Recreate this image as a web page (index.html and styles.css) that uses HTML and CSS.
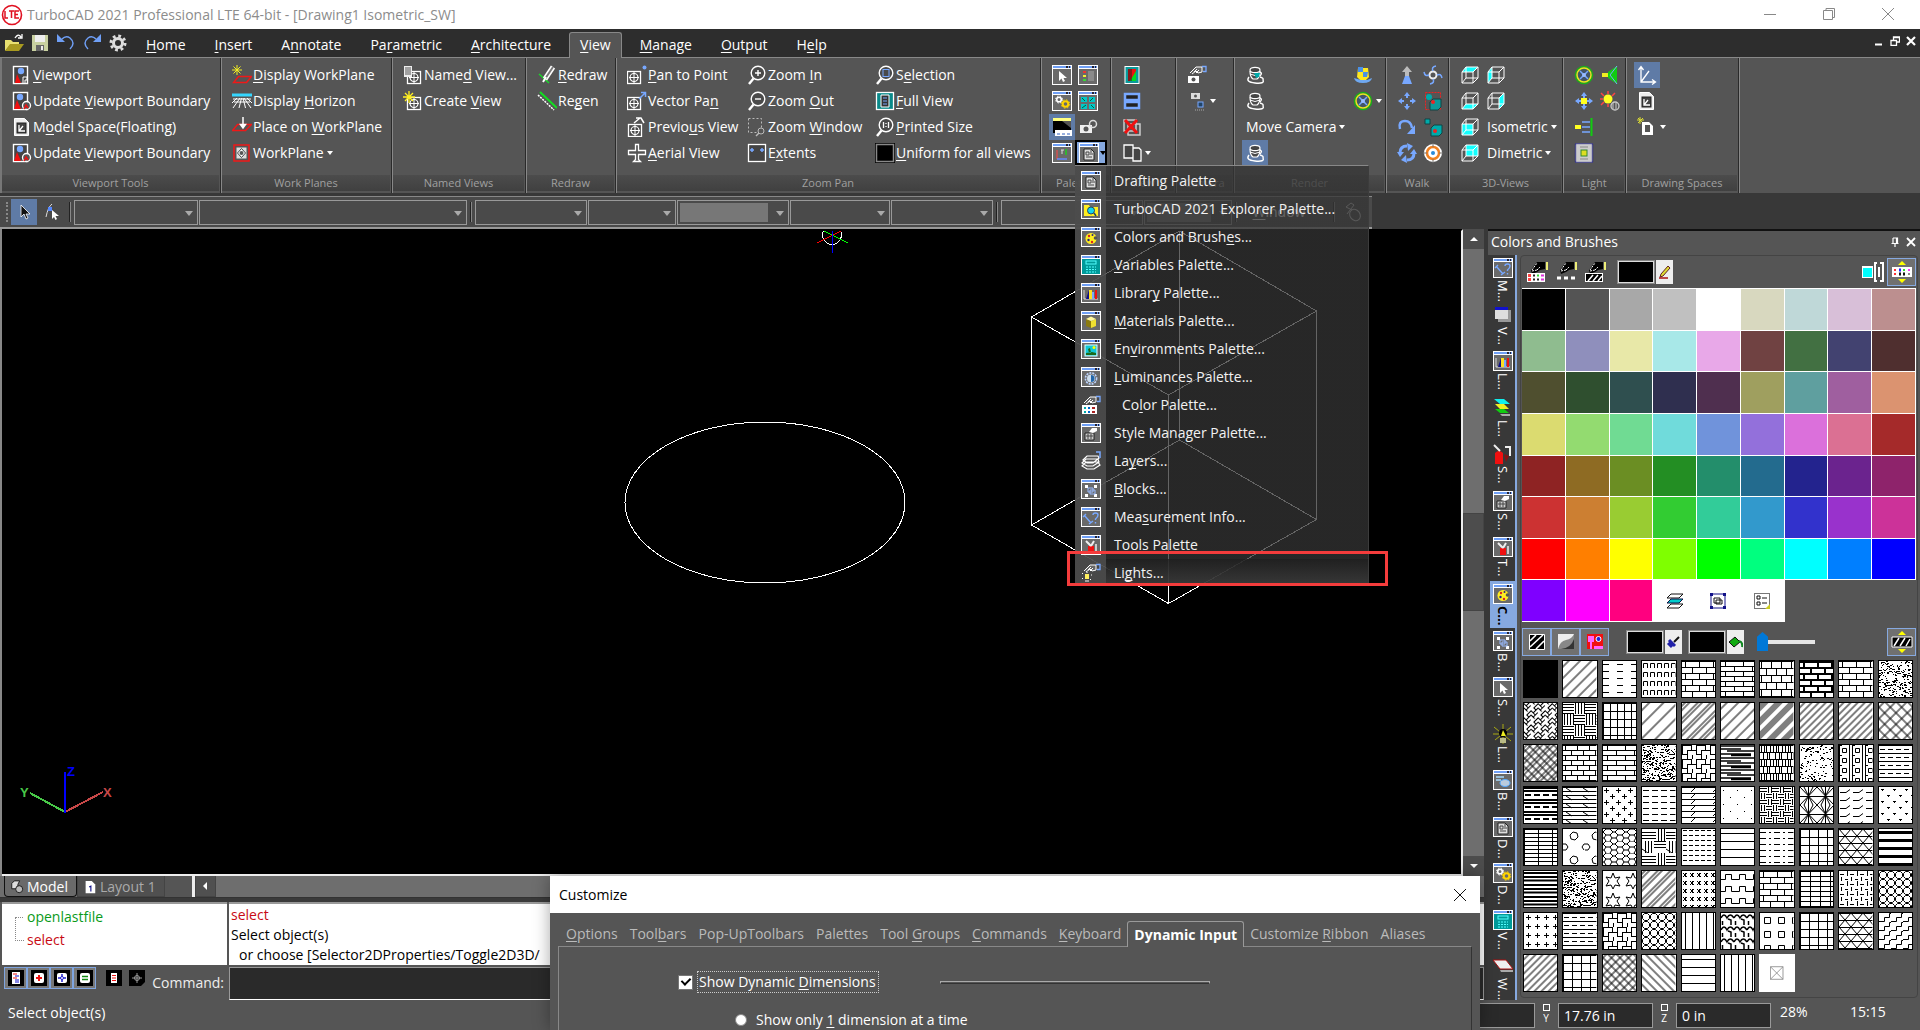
FILE: index.html
```html
<!DOCTYPE html>
<html lang="en">
<head>
<meta charset="utf-8">
<title>TurboCAD 2021 Professional LTE 64-bit</title>
<link rel="stylesheet" href="styles.css">
</head>
<body>
<svg class="defs" aria-hidden="true">
  <symbol id="win" viewBox="0 0 20 20"><rect x=".5" y=".5" width="19" height="19" fill="#6a6a6a" stroke="#fff"/><path d="M1 2h18" stroke="#6f9ff5" stroke-width="2"/><path d="M14 2h2M17 2h1" stroke="#223" stroke-width="2"/><path d="M1 3.5h18" stroke="#fff"/></symbol>
  <symbol id="vp" viewBox="0 0 20 20"><rect x="1.5" y="1.5" width="14" height="17" fill="#444" stroke="#fff" stroke-width="1.4"/><circle cx="9" cy="6" r="3.2" fill="#78a8ff"/><path d="M5 9l4 9H3z" fill="#f01010"/><path d="M11 18v-6h4v3h-2v3" fill="none" stroke="#fff"/></symbol>
  <symbol id="vpu" viewBox="0 0 20 20"><rect x="1.5" y="1.5" width="14" height="17" fill="#444" stroke="#fff" stroke-width="1.4"/><circle cx="8" cy="6" r="3.2" fill="#78a8ff"/><path d="M5 9l4 9H2z" fill="#f01010"/><circle cx="14.500" cy="14.500" r="4" fill="#555" stroke="#fff" stroke-width="1.3"/><path d="M12 18l2-4 2 3" fill="none" stroke="#f01010" stroke-width="1.5"/></symbol>
  <symbol id="ms" viewBox="0 0 20 20"><path d="M2.500 1.500h10l4 4v13h-14z" fill="#eee" stroke="#fff"/><rect x="5" y="6" width="9" height="10" fill="#444" stroke="#222"/><path d="M7 8v6h6M7 14l4-5" stroke="#fff" fill="none" stroke-width="1.300"/></symbol>
  <symbol id="dwp" viewBox="0 0 20 20"><path d="M5 0v10M0 5h10M1.500 1.500l7 7M8.500 1.500l-7 7" stroke="#f4f020"/><path d="M6.500 11.500h13l-5 6h-13z" fill="none" stroke="#f01818" stroke-width="1.500"/></symbol>
  <symbol id="hor" viewBox="0 0 20 20"><path d="M0 4h20" stroke="#35d6ff" stroke-width="3"/><path d="M1 8h18M2 11h16M8 7l-7 10M12 7l7 10M9.500 7L7 17M11 7l2.500 10M5 7l-5 5M15 7l5 5" stroke="#fff"/></symbol>
  <symbol id="pwp" viewBox="0 0 20 20"><path d="M5.500 7.500h14l-6 6h-13z" fill="none" stroke="#f01818" stroke-width="1.500"/><path d="M11 0v10M8.500 7.500L11 11l2.500-3.500z" stroke="#fff" fill="#fff" stroke-width="1.500"/></symbol>
  <symbol id="wp" viewBox="0 0 20 20"><rect x="2" y="2" width="15" height="16" fill="none" stroke="#f01818" stroke-width="1.500"/><rect x="4.500" y="4.500" width="10" height="11" fill="#ddd"/><path d="M9.500 5.500l4 4.500-4 4.500-4-4.500z" fill="#fff" stroke="#444"/><circle cx="9.500" cy="10" r="2" fill="#555"/></symbol>
  <symbol id="cam" viewBox="0 0 20 20"><rect x="4.500" y="6.500" width="13" height="12" fill="#4a4a4a" stroke="#fff" stroke-width="1.300"/><circle cx="11" cy="12.500" r="4" fill="none" stroke="#fff" stroke-width="1.200"/><path d="M11 7v11M6 12.500h10" stroke="#fff"/></symbol>
  <symbol id="nv" viewBox="0 0 20 20"><use href="#cam"/><path d="M1 1h8v11H1z" fill="#eee"/><path d="M2 3h6M2 5h6M2 7h6M2 9h6" stroke="#555"/></symbol>
  <symbol id="cv" viewBox="0 0 20 20"><use href="#cam"/><path d="M6 0v12M0 6h12M2 2l8 8M10 2l-8 8" stroke="#fff020" stroke-width="1.300"/></symbol>
  <symbol id="rd" viewBox="0 0 20 20"><path d="M2 9l10 9" stroke="#18d828" stroke-width="1.500"/><path d="M16 2l-8 12" stroke="#fff" stroke-width="5"/><path d="M16 2l-8 12" stroke="#777" stroke-width="2"/><path d="M9 12l-3 5" stroke="#fff" stroke-width="2"/></symbol>
  <symbol id="rg" viewBox="0 0 20 20"><path d="M3 1l17 16" stroke="#10e020" stroke-width="2"/><path d="M1 4l16 15" stroke="#fff" stroke-dasharray="2 1" stroke-width="1.500"/></symbol>
  <symbol id="pp" viewBox="0 0 20 20"><g transform="translate(-4)"><use href="#cam" width="20" height="20"/></g><circle cx="17.500" cy="2.500" r="2" fill="#78a8ff"/></symbol>
  <symbol id="vpn" viewBox="0 0 20 20"><g transform="translate(-4)"><use href="#cam" width="20" height="20"/></g><path d="M12 8l6-6M14 1.500h4.500V6" stroke="#78a8ff" stroke-width="1.500" fill="none"/></symbol>
  <symbol id="pv" viewBox="0 0 20 20"><g transform="translate(-3 1)"><use href="#cam" width="20" height="20"/></g><path d="M7 6l6-5M9 1h5l3 5" stroke="#fff" stroke-width="1.500" fill="none"/></symbol>
  <symbol id="av" viewBox="0 0 20 20"><path d="M8.500 1.500h3v6h7v4h-7v5l2 2h-7l2-2v-5h-7v-4h7z" fill="#555" stroke="#fff" stroke-width="1.300"/></symbol>
  <symbol id="mag" viewBox="0 0 20 20"><circle cx="11" cy="8" r="6.800" fill="#4a4a4a" stroke="#fff" stroke-width="1.400"/><path d="M6.500 13.500L2 19" stroke="#fff" stroke-width="2.400"/></symbol>
  <symbol id="zi" viewBox="0 0 20 20"><use href="#mag"/><path d="M8 8h6M11 5v6" stroke="#fff" stroke-width="1.400"/></symbol>
  <symbol id="zo" viewBox="0 0 20 20"><use href="#mag"/><path d="M8 8h6" stroke="#fff" stroke-width="1.400"/></symbol>
  <symbol id="zw" viewBox="0 0 20 20"><path d="M1.500 1.500h13v9M1.500 1.500v14h8" stroke="#bbb" fill="none" stroke-dasharray="2 2"/><circle cx="14" cy="14" r="3" fill="none" stroke="#bbb"/><path d="M12 16l-3 3" stroke="#bbb" stroke-width="1.500"/></symbol>
  <symbol id="ex" viewBox="0 0 20 20"><rect x="1.500" y="1.500" width="17" height="17" fill="#444" stroke="#fff" stroke-width="1.300"/><path d="M3 7h4M5 5v4M13 7h4M15 5v4" stroke="#78a8ff" stroke-width="1.500"/></symbol>
  <symbol id="zs" viewBox="0 0 20 20"><use href="#mag"/><rect x="8" y="4.500" width="6" height="7" fill="none" stroke="#78a8ff"/></symbol>
  <symbol id="fv" viewBox="0 0 20 20"><rect x="1.500" y="1.500" width="17" height="17" fill="#0a8a8a" stroke="#fff" stroke-width="1.300"/><path d="M6 4h8v12H6z" fill="#333" stroke="#fff"/><path d="M8 7h4M8 10h4M8 13h4" stroke="#78a8ff"/></symbol>
  <symbol id="ps" viewBox="0 0 20 20"><use href="#mag"/><path d="M8.500 5v6M13.500 5v6M11 6v1M11 9v1" stroke="#fff" stroke-width="1.300"/></symbol>
  <symbol id="blk" viewBox="0 0 20 20"><rect width="20" height="20"/><rect x="1.500" y="1.500" width="17" height="17" stroke="#888" stroke-width="1.500"/></symbol>
  <symbol id="w-sel" viewBox="0 0 20 20"><use href="#win"/><path d="M7 6v10l2.500-2.500L11 17l2-1-1.500-3H15z" fill="#fff"/></symbol>
  <symbol id="w-list" viewBox="0 0 20 20"><use href="#win"/><path d="M5 7h3" stroke="#e33" stroke-width="2"/><path d="M5 11h3" stroke="#ee3" stroke-width="2"/><path d="M5 15h3" stroke="#3d3" stroke-width="2"/><path d="M10 7h6M10 9h6M10 11h6M10 13h6M10 15h6" stroke="#aaa"/></symbol>
  <symbol id="w-gear" viewBox="0 0 20 20"><use href="#win"/><circle cx="7" cy="8.500" r="2.300" fill="none" stroke="#fff" stroke-width="1.600"/><circle cx="7" cy="8.500" r="3.500" fill="none" stroke="#fff" stroke-dasharray="1.400 1.400"/><circle cx="13.500" cy="13" r="2.800" fill="none" stroke="#ffd400" stroke-width="2"/><circle cx="13.500" cy="13" r="4.200" fill="none" stroke="#ffd400" stroke-dasharray="1.600 1.700"/></symbol>
  <symbol id="w-tile" viewBox="0 0 20 20"><use href="#win"/><path d="M3 6h6v5H3zM11 6h6v5h-6zM3 13h6v5H3zM11 13h6v5h-6z" fill="#00c8c8"/><path d="M4 7l3 3M12 10l3-3M4 17l4-3M13 14l3 3" stroke="#0a5a3a"/></symbol>
  <symbol id="w-cmd" viewBox="0 0 20 20"><path d="M1 2h18v14H1z"/><path d="M1 1h18v3H1z" fill="#ffff80"/><path d="M10 4h9v7z" fill="#555"/><path d="M3 13h17v6H3z" fill="#fff"/><path d="M5 17h3M10 17h3M15 17h3" stroke="#3060c0"/></symbol>
  <symbol id="w-cam" viewBox="0 0 20 20"><rect x="2" y="8" width="12" height="8" fill="#eee"/><circle cx="8" cy="12" r="2.500" fill="#555"/><circle cx="15" cy="7" r="3.500" fill="none" stroke="#ddd" stroke-width="1.500"/></symbol>
  <symbol id="w-ax" viewBox="0 0 20 20"><use href="#win"/><path d="M5 7v9" stroke="#f44"/><path d="M5 16h10" stroke="#68f" stroke-width="1.500"/><path d="M14 6v6" stroke="#2c2" stroke-width="1.500"/><path d="M9 7h3M10 7v4" stroke="#ddd"/></symbol>
  <symbol id="w-draft" viewBox="0 0 20 20"><use href="#win"/><path d="M5 6h7l3 3v8H5z" fill="#ddd" stroke="#222"/><path d="M7 9h3v3H7zM11 11h3M7 14h6M12 7v3" stroke="#444" fill="none"/></symbol>
  <symbol id="w-exp" viewBox="0 0 20 20"><use href="#win"/><path d="M3 6h5l1 2h8v9H3z" fill="#ffee20"/><circle cx="10" cy="11.500" r="3.500" fill="#10d8f0" stroke="#246"/><path d="M13 14l2 3" stroke="#246" stroke-width="1.500"/></symbol>
  <symbol id="w-pal" viewBox="0 0 20 20"><use href="#win"/><circle cx="10" cy="11.500" r="5.500" fill="#ffee20"/><circle cx="14.500" cy="11" r="1.800" fill="#555"/><circle cx="8" cy="9" r="1.200" fill="#d22"/><circle cx="11.500" cy="8" r="1" fill="#228"/><circle cx="7.500" cy="13" r="1.200" fill="#228"/><circle cx="11" cy="15" r="1.200" fill="#d22"/></symbol>
  <symbol id="w-var" viewBox="0 0 20 20"><use href="#win"/><rect x="1" y="4" width="18" height="15" fill="#009a9a"/><rect x="5" y="6" width="10" height="3" fill="none" stroke="#5ff"/><path d="M5 12h10M5 14.500h10M5 17h10" stroke="#5ff" stroke-dasharray="2 1"/></symbol>
  <symbol id="w-lib" viewBox="0 0 20 20"><use href="#win"/><path d="M3 7v9h14" stroke="#ddd" fill="none"/><path d="M5 16l3-9v9z" fill="#118"/><path d="M8 7h3v9H8z" fill="#ffe020"/><path d="M11 9h2v7h-2z" fill="#78a8ff"/><path d="M14 7h2v9h-2z" fill="#e11"/></symbol>
  <symbol id="w-mat" viewBox="0 0 20 20"><use href="#win"/><path d="M5 8l5 2v7l-5-2z" fill="#8a7a10"/><path d="M10 10l5-2v7l-5 2z" fill="#f0e030"/><path d="M5 8l5-2.500L15 8l-5 2z" fill="#fff8a0"/></symbol>
  <symbol id="w-env" viewBox="0 0 20 20"><use href="#win"/><rect x="4" y="6" width="12" height="11" fill="#10c8d8" stroke="#dff"/><path d="M5 16h10v-2l-4-1-6 1zM7 10l2-1 1 5H8z" fill="#1a6a1a"/><circle cx="13" cy="8.500" r="1.500" fill="#ff0"/></symbol>
  <symbol id="w-lum" viewBox="0 0 20 20"><use href="#win"/><circle cx="10" cy="11.500" r="5.600" fill="none" stroke="#bcd4ff" stroke-width="1.600" stroke-dasharray="2 1"/><circle cx="10" cy="11.500" r="4" fill="#cde"/><path d="M10 8a3.500 3.500 0 0 1 0 7z" fill="#26a"/></symbol>
  <symbol id="hand" viewBox="0 0 20 20"><path d="M3 8l6-6h6v5l-4 1-2-2-4 3" fill="#666" stroke="#fff"/><path d="M7 7l3-3M9 8l3-3" stroke="#fff"/><path d="M15 1.500h4v5h-3" stroke="#78a8ff" stroke-width="1.300" fill="none"/></symbol>
  <symbol id="w-col" viewBox="0 0 20 20"><use href="#hand"/><path d="M1 10h15v9H1z" fill="#fff"/><path d="M3 13h2M3 17h2" stroke="#0aa" stroke-width="2"/><path d="M7 13h2M7 17h2" stroke="#06c" stroke-width="2"/><path d="M11 13h3M11 17h3" stroke="#a22" stroke-width="2"/></symbol>
  <symbol id="w-sty" viewBox="0 0 20 20"><use href="#win"/><path d="M4 10h9v7H4z" fill="#ccc" stroke="#222"/><path d="M8 9l3-4h5v3l-4 2z" fill="#fff"/><path d="M5 13h7M7 11v5M10 11v5" stroke="#444"/></symbol>
  <symbol id="w-lay" viewBox="0 0 20 20"><path d="M1 15l4-4h12l2 3-6 4H6z M1 12l4-4h12l1 3-6 4H6zM2 9l4-4h11l1 2-6 5H6z" fill="#555" stroke="#fff" stroke-width="1.200"/><path d="M15 1h4v6" stroke="#78a8ff" stroke-width="1.500" fill="none"/></symbol>
  <symbol id="w-blk" viewBox="0 0 20 20"><use href="#win"/><path d="M4 6h3v3H4zM13 6h3v3h-3zM4 15h3v3H4zM13 15h3v3h-3z" fill="#fff"/><path d="M7 9h5v4H7zM9 11h5v4H9z" fill="none" stroke="#9bf"/></symbol>
  <symbol id="w-mea" viewBox="0 0 20 20"><use href="#win"/><path d="M3 8l7 8M2 10l3-3M8 17l4-3M12 8q0-2 2.500-2T17 8t-2.500 4v1M14.500 15v1.500" stroke="#78a8ff" stroke-width="1.400" fill="none"/></symbol>
  <symbol id="w-tool" viewBox="0 0 20 20"><use href="#win"/><path d="M7 11h6v7H7z" fill="#f01010"/><path d="M5 6l5 5M13 6l-3 5" stroke="#eee" stroke-width="2"/><path d="M14 9h2v8h-2z" fill="#ccc"/></symbol>
  <symbol id="w-lig" viewBox="0 0 20 20"><use href="#hand"/><path d="M4 11h4v5H4z" fill="#fff060"/><path d="M6 10V9M2 11L1 10M2 15l-1 1M10 12h1M9 16l1 1M4 18h4" stroke="#fff"/></symbol>
  <symbol id="v1" viewBox="0 0 20 20"><rect x="3" y="1.500" width="14" height="17" fill="#0a9a9a" stroke="#fff"/><path d="M6 4h8v12H6z" fill="#e11"/><path d="M14 6v10H8z" fill="#0d2"/><path d="M6 4h4v12H6z" fill="#222" opacity=".5"/></symbol>
  <symbol id="v2" viewBox="0 0 20 20"><path d="M3 3h14v6H3zM3 11h14v6H3z" fill="#222" stroke="#78a8ff" stroke-width="2.500"/></symbol>
  <symbol id="v3" viewBox="0 0 20 20"><path d="M2 3h12v11H2zM6 7h12v11H6z" fill="none" stroke="#ccc" stroke-width="1.500"/><path d="M3 3l12 13M15 3L3 16" stroke="#f01010" stroke-width="3"/></symbol>
  <symbol id="v4" viewBox="0 0 20 20"><path d="M2 2h9v13H2zM11 5h6l2 2v11h-8z" fill="#444" stroke="#fff" stroke-width="1.300"/></symbol>
  <symbol id="ch" viewBox="0 0 20 20"><use href="#hand"/><path d="M1 11h11v7H1z" fill="#fff"/><circle cx="6.500" cy="14.500" r="2" fill="#555"/></symbol>
  <symbol id="ch2" viewBox="0 0 20 20"><path d="M4 2h9v6H4z" fill="#ddd"/><circle cx="8.500" cy="5" r="1.500" fill="#555"/><rect x="11" y="11" width="5" height="5" fill="#246" stroke="#78a8ff"/><path d="M8 19h10" stroke="#aaa" stroke-dasharray="1 1"/></symbol>
  <symbol id="cup" viewBox="0 0 20 20"><path d="M5 6q0 6 3 8h4q3-2 3-8M15 7q3 1 0 4" fill="#4a4a4a" stroke="#fff" stroke-width="1.200"/><ellipse cx="10" cy="5" rx="5" ry="2.700" fill="#444" stroke="#fff" stroke-width="1.200"/><path d="M5 9q5 3 10 0" stroke="#fff" fill="none"/><path d="M4 12q-4 5 6 6t8-3q1-2-3-3" fill="none" stroke="#fff" stroke-width="1.400"/></symbol>
  <symbol id="cup2" viewBox="0 0 20 20"><use href="#cup"/><path d="M9 8h6l-1 4-3 1z" fill="#0aa"/></symbol>
  <symbol id="cup3" viewBox="0 0 20 20"><path d="M5 3h10l1 9-4 4H8l-4-4z" fill="#ffe820"/><path d="M5 2h5v5H5zM10 7h5l-1 5h-4z" fill="#4a90e8"/><path d="M1 13q1 5 9 5t9-5l-5 2H8z" fill="#6fa8f0"/></symbol>
  <symbol id="tgt" viewBox="0 0 20 20"><circle cx="10" cy="10" r="8.500" fill="none" stroke="#18b018" stroke-width="1.500"/><circle cx="10" cy="10" r="7" fill="#456" stroke="#e8e820" stroke-width="1.500"/><path d="M6 6l8 8M14 6l-8 8" stroke="#78a8ff" stroke-width="1.500"/><circle cx="10" cy="10" r="2" fill="#9bf"/></symbol>
  <symbol id="k1" viewBox="0 0 20 20"><path d="M10 1l5 6h-3v6H8V7H5z" fill="#bbb"/><path d="M8 11h4l3 8H5z" fill="#78a8ff"/></symbol>
  <symbol id="k2" viewBox="0 0 20 20"><circle cx="10" cy="10" r="3.500" fill="#555" stroke="#eee" stroke-width="2"/><path d="M10 6q-2-4 3-5M14 10q4-2 5 3M10 14q2 4-3 5M6 10q-4 2-5-3" stroke="#78a8ff" stroke-width="1.500" fill="none"/></symbol>
  <symbol id="k3" viewBox="0 0 20 20"><path d="M10 1l3 4H7zM10 19l3-4H7zM1 10l4-3v6zM19 10l-4-3v6z" fill="#78a8ff"/><path d="M9 5h2v2H9zM9 13h2v2H9zM5 9h2v2H5zM13 9h2v2h-2z" fill="#78a8ff"/></symbol>
  <symbol id="k4" viewBox="0 0 20 20"><rect x="2.500" y="1.500" width="15" height="17" fill="none" stroke="#e22" stroke-dasharray="2 1"/><circle cx="6" cy="6" r="3" fill="#0aa"/><path d="M7 11l3-3h8v8l-3 3H7z" fill="#0a9a9a" stroke="#144"/><circle cx="10" cy="11" r="2" fill="#e22"/></symbol>
  <symbol id="k5" viewBox="0 0 20 20"><path d="M3 12q-2-8 5-8 6 0 7 7" stroke="#78a8ff" stroke-width="2.500" fill="none"/><path d="M18 8v9h-8z" fill="#78a8ff"/></symbol>
  <symbol id="k6" viewBox="0 0 20 20"><path d="M2 2h5v5H2zM8 11l3-3h8v8l-3 3H8z" fill="#0aa" stroke="#144"/><circle cx="12" cy="14" r="2" fill="#e22"/></symbol>
  <symbol id="k7" viewBox="0 0 20 20"><path d="M3 10q0-7 7-7M17 10q0 7-7 7" stroke="#78a8ff" stroke-width="3" fill="none"/><path d="M10 0l6 3-5 5zM10 20l-6-3 5-5zM0 9h7l-4 5zM20 11h-7l4-5z" fill="#78a8ff"/></symbol>
  <symbol id="k8" viewBox="0 0 20 20"><circle cx="10" cy="10" r="9" fill="#fff"/><circle cx="10" cy="10" r="6" fill="none" stroke="#f08020" stroke-width="2.500"/><circle cx="10" cy="10" r="2" fill="#2a8ad8"/><path d="M10 0v4M10 16v4M0 10h4M16 10h4" stroke="#777"/></symbol>
  <symbol id="cube" viewBox="0 0 20 20"><path d="M2 7h11v11H2zM6 2h12v11H6zM2 7l4-5M13 7l5-5M13 18l5-5M2 18l4-5" fill="none" stroke="#fff"/></symbol>
  <symbol id="c1" viewBox="0 0 20 20"><path d="M2 7l4-5h12l-5 5z" fill="#1ff"/><use href="#cube"/></symbol>
  <symbol id="c2" viewBox="0 0 20 20"><path d="M2 7l4-5v11l-4 5z" fill="#1ff"/><use href="#cube"/></symbol>
  <symbol id="c3" viewBox="0 0 20 20"><path d="M2 18l4-5h12l-5 5z" fill="#1ff"/><use href="#cube"/></symbol>
  <symbol id="c4" viewBox="0 0 20 20"><path d="M13 7l5-5v11l-5 5z" fill="#1ff"/><use href="#cube"/></symbol>
  <symbol id="c5" viewBox="0 0 20 20"><path d="M2 7h11v11H2z" fill="#1ff"/><use href="#cube"/></symbol>
  <symbol id="c6" viewBox="0 0 20 20"><path d="M6 2h12v11H6z" fill="#1ff"/><use href="#cube"/></symbol>
  <symbol id="l1" viewBox="0 0 20 20"><path d="M2 8h6v4H2z" fill="#ee2"/><path d="M8 7l9-6v18l-9-6z" fill="#1c1"/><path d="M17 1l-7 9 7 9" stroke="#78a8ff" fill="none"/></symbol>
  <symbol id="l2" viewBox="0 0 20 20"><use href="#k3"/><rect x="7" y="7" width="6" height="6" fill="#ff2"/></symbol>
  <symbol id="l3" viewBox="0 0 20 20"><circle cx="8" cy="8" r="4.500" fill="#ff2"/><path d="M8 0v3M8 13v3M0 8h3M1 2l3 3M15 2l-3 3M1 14l3-3" stroke="#f44" stroke-width="1.500"/><circle cx="15" cy="15" r="4" fill="#555" stroke="#ccc" stroke-width="1.300"/><path d="M13 12v6M16 12v6" stroke="#ccc"/></symbol>
  <symbol id="l4" viewBox="0 0 20 20"><path d="M1 8h6v4H1z" fill="#ff2"/><path d="M8 5h8M8 10h8M8 15h8" stroke="#78a8ff" stroke-width="1.500"/><path d="M17.500 1v18" stroke="#1c1" stroke-width="2"/></symbol>
  <symbol id="l5" viewBox="0 0 20 20"><rect x="1.500" y=".5" width="17" height="19" fill="#ccc" stroke="#118" stroke-dasharray="1 1" stroke-width="1.500"/><rect x="7" y="7" width="6" height="6" fill="#dd2" stroke="#383"/><path d="M6 4h8M6 16h8" stroke="#888"/></symbol>
  <symbol id="d1" viewBox="0 0 20 20"><path d="M4 2v15h14M1.500 5L4 1.500 6.500 5M15 14.500L18.500 17 15 19.500M4 17L12 6" stroke="#fff" stroke-width="1.300" fill="none"/></symbol>
  <symbol id="d3" viewBox="0 0 20 20"><path d="M3 0v7M0 3h7M1 1l5 5M6 1L1 6" stroke="#dd3"/><path d="M5 5h7l4 4v9H5z" fill="#fff"/><rect x="8" y="8" width="5" height="7" fill="#555"/></symbol>
  <symbol id="s-V" viewBox="0 0 20 20"><path d="M5 5h13v12H5z" fill="#999"/><path d="M2 2h13v12H2z" fill="#ddd"/><path d="M2 2h13v3H2z" fill="#11c"/></symbol>
  <symbol id="s-L" viewBox="0 0 20 20"><path d="M1 1h10l6 5H7z" fill="#1ee"/><path d="M2 6h9l5 5H7z" fill="#ee2"/><path d="M2 11h9l5 4H7z" fill="#1c1"/><path d="M7 16h10v2H9z" fill="#aaa"/></symbol>
  <symbol id="s-S" viewBox="0 0 20 20"><path d="M2 9q4-4 8 0v11H2z" fill="#f01010"/><path d="M1 1l6 6" stroke="#eee" stroke-width="2"/><path d="M12 3h5v9" stroke="#eee" stroke-width="2" fill="none"/><path d="M11 10l5 2-3 6z" fill="#811"/></symbol>
  <symbol id="s-Li" viewBox="0 0 20 20"><path d="M10 0v20M1 3l17 14M18 3L2 16M0 10h20" stroke="#aa1"/><circle cx="10" cy="9" r="4"/><path d="M10 6l3 6H8z" fill="#ee2"/><path d="M7 14h6v5H7z" fill="#bb8"/></symbol>
  <symbol id="s-B" viewBox="0 0 20 20"><use href="#win"/><path d="M3 7h8M3 10h5" stroke="#adf" stroke-width="1.500"/><ellipse cx="12" cy="13" rx="5" ry="3.500" fill="#bcd" stroke="#5af"/></symbol>
  <symbol id="s-W" viewBox="0 0 20 20"><path d="M0 4h13l7 9H7z" fill="#eee" stroke="#a11"/><path d="M7 14h13v2H8z" fill="#aaa"/></symbol>
  <symbol id="hb" viewBox="0 0 24 24"><path d="M4 10l6-8h8v7l-5 1-3 2-5 2z"/><path d="M5 10l5-7M5 11l5-1M10 10l3-3" stroke="#fff" stroke-dasharray="2 1"/><path d="M20 2v8" stroke="#ee7" stroke-width="2"/></symbol>
  <symbol id="b1" viewBox="0 0 24 24"><use href="#hb"/><path d="M0 13h18v9H0z" fill="#fff"/><path d="M1 15.500h3M1 19.500h3" stroke="#f44" stroke-width="3"/><path d="M6 15.500h2M6 19.500h2M10 19.500h2" stroke="#222" stroke-width="2"/><path d="M10 15.500h2" stroke="#3d3" stroke-width="2"/><path d="M14 15.500h3M14 19.500h3" stroke="#d3d" stroke-width="2"/></symbol>
  <symbol id="b2" viewBox="0 0 24 24"><use href="#hb"/><path d="M1 18h4M8 18h4M15 18h4" stroke="#fff" stroke-width="3"/></symbol>
  <symbol id="b3" viewBox="0 0 24 24"><use href="#hb"/><rect x=".5" y="13.500" width="17" height="8" stroke="#fff"/><path d="M3 21l5-6M8 21l5-6M13 21l4-5" stroke="#fff" stroke-width="1.500"/></symbol>
  <symbol id="b4" viewBox="0 0 24 24"><path d="M1 6h11v12H1z" fill="#fff"/><path d="M2 8h9v9H2z" fill="#0ff"/><path d="M16 3h-2v18h2M19 3h3v18h-3M18 7v10" stroke="#fff" stroke-width="2" fill="none"/></symbol>
  <symbol id="b5" viewBox="0 0 24 24"><path d="M12 1l4 4H8zM12 23l4-4H8z" fill="#ff0"/><path d="M2 7h20v10H2z" fill="#fff"/><path d="M4 10h2M4 14h2" stroke="#f33" stroke-width="2"/><path d="M9 10h2" stroke="#22f" stroke-width="3"/><path d="M13 10h2" stroke="#3d3" stroke-width="2"/><path d="M18 10h2" stroke="#f3f" stroke-width="2"/><path d="M9 14h2M13 14h2" stroke-width="3" stroke="#111"/><path d="M18 14h2" stroke="#888" stroke-width="2"/></symbol>
  <symbol id="b6" viewBox="0 0 24 24"><path d="M12 1l4 4H8zM12 23l4-4H8z" fill="#ff0"/><path d="M2 7h20v10H2z" stroke="#fff"/><path d="M4 16l5-8M10 16l5-8M16 16l4-7" stroke="#fff" stroke-width="1.500"/></symbol>
  <symbol id="h1" viewBox="0 0 24 24"><path d="M4.500 4.500h15v15h-15z" stroke="#fff"/><path d="M5 11l6-6M5 17L18 5M11 19l8-8" stroke="#fff" stroke-width="1.600"/></symbol>
  <symbol id="h2" viewBox="0 0 24 24"><path d="M4 4h16v15H4z" fill="#eee"/><path d="M20 4v15H4q2-8 8-9t8-6z" fill="#888"/><path d="M20 9v10H7q10-1 13-10z" fill="#333"/></symbol>
  <symbol id="h3" viewBox="0 0 24 24"><path d="M4 4h16v15H4z" fill="#f01010"/><path d="M5 6h6v6H9v7H7v-7H5zM11 16h9v3h-9z" fill="#f6f"/><circle cx="15.500" cy="9" r="2.500" fill="#22d" stroke="#fff"/></symbol>
</svg>

<header class="titlebar">
  <svg class="logo" viewBox="0 0 22 22"><circle cx="11" cy="11" r="9.500" fill="#fff" stroke="#e01020" stroke-width="1.600"/><path d="M4 7v7h3M8 7h5M10.500 7v7M18 7h-4v7h4M14 10.500h3" stroke="#e01020" stroke-width="1.500" fill="none"/></svg>
  <h1>TurboCAD 2021 Professional LTE 64-bit - [Drawing1 Isometric_SW]</h1>
  <button aria-label="Minimize"><svg viewBox="0 0 12 12"><path d="M0 6.500h12"/></svg></button>
  <button aria-label="Restore"><svg viewBox="0 0 12 12"><path d="M.5 2.500h9v9h-9zM3 2.500V.5h8.500v9H9.500"/></svg></button>
  <button aria-label="Close"><svg viewBox="0 0 12 12"><path d="M0 0l12 12M12 0L0 12"/></svg></button>
</header>

<nav class="menubar">
  <div class="quick">
    <button aria-label="Open"><svg viewBox="0 0 20 20"><path d="M1 18V7h6l2 2h6v3H6z" fill="#e8e070"/><path d="M1 18l5-7h14l-5 7z" fill="#a89a20"/><path d="M11 5q3-5 6-1M18 1v4h-4" stroke="#fff" fill="none" stroke-width="1.300"/></svg></button>
    <button aria-label="Save"><svg viewBox="0 0 20 20"><path d="M2 2h16v16H2z" fill="#c8d0a0"/><path d="M5 2h10v7H5z" fill="#eee"/><path d="M6 12h8v6H6z" fill="#666"/><path d="M11 13h2v4h-2z" fill="#eee"/></svg></button>
    <button aria-label="Undo"><svg viewBox="0 0 20 20"><path d="M1 1v8h8z" fill="#6f9ff5"/><path d="M6 6q4-4 8-1 6 5 0 11" fill="none" stroke="#6f9ff5" stroke-width="1.500"/></svg></button>
    <button aria-label="Redo"><svg viewBox="0 0 20 20"><path d="M19 1v8h-8z" fill="#6f9ff5"/><path d="M14 6Q10 2 6 5q-6 5 0 11" fill="none" stroke="#6f9ff5" stroke-width="1.500"/></svg></button>
    <button aria-label="Options"><svg viewBox="0 0 20 20"><circle cx="10" cy="10" r="4.500" fill="none" stroke="#ddd" stroke-width="3"/><circle cx="10" cy="10" r="7" fill="none" stroke="#ddd" stroke-width="3" stroke-dasharray="2.750 2.750"/></svg></button>
  </div>
  <a href="#home"><u>H</u>ome</a><a href="#insert"><u>I</u>nsert</a><a href="#annotate">A<u>n</u>notate</a><a href="#parametric">Pa<u>r</u>ametric</a><a href="#architecture"><u>A</u>rchitecture</a><a href="#view" class="on"><u>V</u>iew</a><a href="#manage"><u>M</u>anage</a><a href="#output"><u>O</u>utput</a><a href="#help">H<u>e</u>lp</a>
  <div class="mdi">
    <button aria-label="Minimize drawing"><svg viewBox="0 0 10 10"><path d="M1 8.500h7" stroke-width="2"/></svg></button>
    <button aria-label="Restore drawing"><svg viewBox="0 0 10 10"><path d="M1 4.500h5.500v5H1zM3.500 4V1h6v5H7M3.500 1.500h6" stroke-width="1.300"/></svg></button>
    <button aria-label="Close drawing"><svg viewBox="0 0 10 10"><path d="M1 1l8 8M9 1L1 9" stroke-width="2.200"/></svg></button>
  </div>
</nav>

<section class="ribbon">
  <div class="grp w220"><div class="cols"><div class="col">
    <button class="cmd"><svg><use href="#vp"/></svg><span><u>V</u>iewport</span></button>
    <button class="cmd"><svg><use href="#vpu"/></svg><span>Update <u>V</u>iewport Boundary</span></button>
    <button class="cmd"><svg><use href="#ms"/></svg><span>M<u>o</u>del Space(Floating)</span></button>
    <button class="cmd"><svg><use href="#vpu"/></svg><span>Update <u>V</u>iewport Boundary</span></button>
  </div></div><h2>Viewport Tools</h2></div>
  <div class="grp w171"><div class="cols"><div class="col">
    <button class="cmd"><svg><use href="#dwp"/></svg><span><u>D</u>isplay WorkPlane</span></button>
    <button class="cmd"><svg><use href="#hor"/></svg><span>Display <u>H</u>orizon</span></button>
    <button class="cmd"><svg><use href="#pwp"/></svg><span>Place on <u>W</u>orkPlane</span></button>
    <button class="cmd drop"><svg><use href="#wp"/></svg><span>WorkPlane</span></button>
  </div></div><h2>Work Planes</h2></div>
  <div class="grp w134"><div class="cols"><div class="col">
    <button class="cmd"><svg><use href="#nv"/></svg><span>Name<u>d</u> View...</span></button>
    <button class="cmd"><svg><use href="#cv"/></svg><span>Create <u>V</u>iew</span></button>
  </div></div><h2>Named Views</h2></div>
  <div class="grp w90"><div class="cols"><div class="col">
    <button class="cmd"><svg><use href="#rd"/></svg><span><u>R</u>edraw</span></button>
    <button class="cmd"><svg><use href="#rg"/></svg><span>Re<u>g</u>en</span></button>
  </div></div><h2>Redraw</h2></div>
  <div class="grp w425"><div class="cols"><div class="col c120">
    <button class="cmd"><svg><use href="#pp"/></svg><span><u>P</u>an to Point</span></button>
    <button class="cmd"><svg><use href="#vpn"/></svg><span>Vector Pa<u>n</u></span></button>
    <button class="cmd"><svg><use href="#pv"/></svg><span>Previo<u>u</u>s View</span></button>
    <button class="cmd"><svg><use href="#av"/></svg><span><u>A</u>erial View</span></button>
  </div><div class="col c128">
    <button class="cmd"><svg><use href="#zi"/></svg><span>Zoom <u>I</u>n</span></button>
    <button class="cmd"><svg><use href="#zo"/></svg><span>Zoom <u>O</u>ut</span></button>
    <button class="cmd"><svg><use href="#zw"/></svg><span>Zoom <u>W</u>indow</span></button>
    <button class="cmd"><svg><use href="#ex"/></svg><span>E<u>x</u>tents</span></button>
  </div><div class="col">
    <button class="cmd"><svg><use href="#zs"/></svg><span>S<u>e</u>lection</span></button>
    <button class="cmd"><svg><use href="#fv"/></svg><span><u>F</u>ull View</span></button>
    <button class="cmd"><svg><use href="#ps"/></svg><span><u>P</u>rinted Size</span></button>
    <button class="cmd"><svg><use href="#blk"/></svg><span><u>U</u>niform for all views</span></button>
  </div></div><h2>Zoom Pan</h2></div>
  <div class="grp w70"><div class="cols"><div class="col icons">
    <button aria-label="Selection info"><svg><use href="#w-sel"/></svg></button>
    <button aria-label="Drawing tools"><svg><use href="#w-gear"/></svg></button>
    <button aria-label="Command line" class="lit"><svg><use href="#w-cmd"/></svg></button>
    <button aria-label="Coordinates"><svg><use href="#w-ax"/></svg></button>
  </div><div class="col icons">
    <button aria-label="Properties"><svg><use href="#w-list"/></svg></button>
    <button aria-label="Tiles"><svg><use href="#w-tile"/></svg></button>
    <button aria-label="Camera"><svg><use href="#w-cam"/></svg></button>
    <div class="split">
      <button aria-label="Palettes" class="open"><svg><use href="#w-draft"/></svg></button>
      <ul class="menu">
        <li><button><svg><use href="#w-draft"/></svg><span>Drafting Palette</span></button></li>
        <li><button><svg><use href="#w-exp"/></svg><span>TurboCAD 2021 Explorer Palette...</span></button></li>
        <li><button><svg><use href="#w-pal"/></svg><span>Colors and Brush<u>e</u>s...</span></button></li>
        <li><button><svg><use href="#w-var"/></svg><span><u>V</u>ariables Palette...</span></button></li>
        <li><button><svg><use href="#w-lib"/></svg><span>Librar<u>y</u> Palette...</span></button></li>
        <li><button><svg><use href="#w-mat"/></svg><span><u>M</u>aterials Palette...</span></button></li>
        <li><button><svg><use href="#w-env"/></svg><span>En<u>v</u>ironments Palette...</span></button></li>
        <li><button><svg><use href="#w-lum"/></svg><span><u>L</u>uminances Palette...</span></button></li>
        <li><button class="sub"><svg><use href="#w-col"/></svg><span>Co<u>l</u>or Palette...</span></button></li>
        <li><button><svg><use href="#w-sty"/></svg><span>Style Manager Palette...</span></button></li>
        <li><button><svg><use href="#w-lay"/></svg><span>La<u>y</u>ers...</span></button></li>
        <li><button><svg><use href="#w-blk"/></svg><span><u>B</u>locks...</span></button></li>
        <li><button><svg><use href="#w-mea"/></svg><span>Mea<u>s</u>urement Info...</span></button></li>
        <li><button><svg><use href="#w-tool"/></svg><span>Tools Palette</span></button></li>
        <li class="marked"><button><svg><use href="#w-lig"/></svg><span>Li<u>g</u>hts...</span></button></li>
      </ul>
    </div>
  </div></div><h2 class="start">Palettes</h2></div>
  <div class="grp w65"><div class="cols"><div class="col icons">
    <button aria-label="Viewports"><svg><use href="#v1"/></svg></button>
    <button aria-label="Split view"><svg><use href="#v2"/></svg></button>
    <button aria-label="Remove view"><svg><use href="#v3"/></svg></button>
    <button aria-label="View pages" class="drop"><svg><use href="#v4"/></svg></button>
  </div></div><h2>View</h2></div>
  <div class="grp w58"><div class="cols"><div class="col icons">
    <button aria-label="Camera properties"><svg><use href="#ch"/></svg></button>
    <button aria-label="Camera list" class="drop"><svg><use href="#ch2"/></svg></button>
  </div></div><h2>Camera</h2></div>
  <div class="grp w152"><div class="cols"><div class="col icons c108">
    <button aria-label="Quality render"><svg><use href="#cup2"/></svg></button>
    <button aria-label="Hidden line"><svg><use href="#cup"/></svg></button>
    <button class="cmd drop"><span>Move Camera</span></button>
    <button aria-label="Wireframe" class="lit"><svg><use href="#cup"/></svg></button>
  </div><div class="col icons">
    <button aria-label="Render"><svg><use href="#cup3"/></svg></button>
    <button aria-label="Render target" class="drop"><svg><use href="#tgt"/></svg></button>
  </div></div><h2>Render</h2></div>
  <div class="grp w63"><div class="cols"><div class="col icons">
    <button aria-label="Walk forward"><svg><use href="#k1"/></svg></button>
    <button aria-label="Slide"><svg><use href="#k3"/></svg></button>
    <button aria-label="Turn"><svg><use href="#k5"/></svg></button>
    <button aria-label="Roll"><svg><use href="#k7"/></svg></button>
  </div><div class="col icons">
    <button aria-label="Examine"><svg><use href="#k2"/></svg></button>
    <button aria-label="Rotate view"><svg><use href="#k4"/></svg></button>
    <button aria-label="Rotate object"><svg><use href="#k6"/></svg></button>
    <button aria-label="Walk target"><svg><use href="#k8"/></svg></button>
  </div></div><h2>Walk</h2></div>
  <div class="grp w114"><div class="cols"><div class="col icons">
    <button aria-label="Top"><svg><use href="#c1"/></svg></button>
    <button aria-label="Bottom"><svg><use href="#c3"/></svg></button>
    <button aria-label="Front"><svg><use href="#c5"/></svg></button>
    <button aria-label="Back"><svg><use href="#c6"/></svg></button>
  </div><div class="col icons">
    <button aria-label="Left"><svg><use href="#c2"/></svg></button>
    <button aria-label="Right"><svg><use href="#c4"/></svg></button>
    <button class="cmd drop"><span>Isometric</span></button>
    <button class="cmd drop"><span>Dimetric</span></button>
  </div></div><h2>3D-Views</h2></div>
  <div class="grp w63"><div class="cols"><div class="col icons">
    <button aria-label="Point light"><svg><use href="#tgt"/></svg></button>
    <button aria-label="Omni light"><svg><use href="#l2"/></svg></button>
    <button aria-label="Directional light"><svg><use href="#l4"/></svg></button>
    <button aria-label="Area light"><svg><use href="#l5"/></svg></button>
  </div><div class="col icons">
    <button aria-label="Spot light"><svg><use href="#l1"/></svg></button>
    <button aria-label="Sky light"><svg><use href="#l3"/></svg></button>
  </div></div><h2>Light</h2></div>
  <div class="grp w113"><div class="cols"><div class="col icons">
    <button aria-label="Model space" class="lit"><svg><use href="#d1"/></svg></button>
    <button aria-label="Paper space"><svg><use href="#ms"/></svg></button>
    <button aria-label="New paper space" class="drop"><svg><use href="#d3"/></svg></button>
  </div></div><h2>Drawing Spaces</h2></div>
</section>

<section class="propbar">
  <div class="props">
    <i class="grip"></i>
    <button class="lit" aria-label="Select"><svg viewBox="0 0 20 20"><path d="M7 3v12l3-3 2 5 2-1-2-4h4z" fill="#111" stroke="#fff" stroke-width=".8"/></svg></button>
    <button aria-label="Node edit"><svg viewBox="0 0 20 20"><path d="M3 15q2-10 6-13" stroke="#ddd" fill="none"/><path d="M5 5h4v4H5z" fill="#58f"/><path d="M9 8v9l2-2 1.500 3 1.500-1-1.500-3H16z" fill="#fff"/></svg></button>
    <i class="bar"></i>
    <span class="combo w124"><select aria-label="Layer"></select></span>
    <span class="combo w268"><select aria-label="Style"></select></span>
    <i class="bar"></i>
    <span class="combo w112"><select aria-label="Color"></select></span>
    <span class="combo w88"><select aria-label="Line pattern"></select></span>
    <span class="combo w112 filled"><select aria-label="Line width"></select></span>
    <span class="combo w100"><select aria-label="Brush"></select></span>
    <span class="combo w102"><select aria-label="Brush scale"></select></span>
    <i class="bar"></i>
    <span class="combo w142"><select aria-label="Point style"></select></span>
    <span class="combo w88 filled"><select aria-label="Point size"></select></span>
    <i class="bar"></i>
    <button class="win"><u>W</u>indow</button>
    <i class="bar far"></i>
    <button aria-label="Lasso"><svg viewBox="0 0 20 20"><ellipse cx="12" cy="13" rx="5" ry="6" transform="rotate(-35 12 13)" fill="none" stroke="#ccc"/><path d="M9 8L3 5l5-4 3 2-7 9" stroke="#ccc" fill="none"/></svg></button>
  </div>
</section>

<main>
  <section class="work">
    <div class="view">
      <svg class="canvas" role="img" aria-label="Isometric drawing">
        <g transform="translate(-2 -231)">
          <g fill="none" stroke="#fff">
            <ellipse cx="765" cy="502.500" rx="140" ry="80.500"/>
            <path d="M1179.500 231L1031.500 317L1168.500 395L1316.500 311ZM1031.500 525L1179.500 440L1316.500 519.500L1168.500 603.500ZM1179.500 231V440M1031.500 317V525M1168.500 395V603.500M1316.500 311V519.500"/>
            <circle cx="832" cy="235" r="9.500"/>
          </g>
          <path d="M817 243l30-15" stroke="#f00"/><path d="M818 228l30 15" stroke="#0f0"/><path d="M832.500 228v25" stroke="#00f"/>
          <g fill="none" stroke-width="2"><path d="M65 812l38-20" stroke="#c84848"/><path d="M65 812l-35-19" stroke="#48c848"/><path d="M65 813v-41" stroke="#00f"/></g>
          <g class="axis"><text x="67" y="776" fill="#00f">Z</text><text x="103" y="797" fill="#c84848">X</text><text x="20" y="797" fill="#48c848">Y</text></g>
        </g>
      </svg>
      <div class="vscroll"><button aria-label="Scroll up" class="up"></button><i class="track"></i><i class="thumb"></i><i class="track rest"></i><button aria-label="Scroll down" class="down"></button></div>
    </div>
    <div class="sheets">
      <button class="on"><svg viewBox="0 0 16 16"><path d="M2 4l3-3h6l-2 4v5H2z" fill="#ddd" stroke="#111"/><circle cx="10.500" cy="10.500" r="4" fill="#bbb" stroke="#111"/></svg>Model</button>
      <button><svg viewBox="0 0 16 16"><path d="M3 1h7l4 4v10H3z" fill="#fff"/><path d="M7 8l2-1v6" stroke="#118" fill="none" stroke-width="1.300"/></svg>Layout 1</button>
      <span class="gap"></span><button class="left" aria-label="Scroll left"></button>
    </div>
    <div class="console">
      <ul class="hist"><li class="ok">openlastfile</li><li class="bad">select</li></ul>
      <div class="out"><p class="bad">select</p><p>Select object(s)</p><p class="ind">or choose [Selector2DProperties/Toggle2D3D/</p></div>
      <div class="ctl">
        <div class="set">
          <button aria-label="Log"><svg viewBox="0 0 16 16"><rect width="16" height="16"/><path d="M4 2h8v12H4z" fill="#fff"/><path d="M5 4h4M5 8h4" stroke="#e11"/><path d="M7 6h4M7 10h4M7 12h4" stroke="#11c"/></svg></button>
          <button aria-label="Add"><svg viewBox="0 0 16 16"><rect width="16" height="16"/><rect x="3" y="3" width="10" height="10" rx="2" fill="#fff"/><path d="M5 8h6M8 5v6" stroke="#e11" stroke-width="2"/></svg></button>
          <button aria-label="Snap"><svg viewBox="0 0 16 16"><rect width="16" height="16"/><rect x="3" y="3" width="10" height="10" rx="2" fill="#fff"/><path d="M4 8h8M8 4v8" stroke="#22c" stroke-width="1.500"/><circle cx="8" cy="8" r="1.500" fill="#fff" stroke="#22c"/></svg></button>
          <button aria-label="Equals"><svg viewBox="0 0 16 16"><rect width="16" height="16"/><rect x="3" y="3" width="10" height="10" rx="2" fill="#fff"/><path d="M5 6.500h6M5 9.500h6" stroke="#181" stroke-width="1.300"/></svg></button>
        </div>
        <button aria-label="List"><svg viewBox="0 0 16 16"><rect width="16" height="16"/><path d="M5 3h6v10H5z" fill="#fff"/><path d="M6 5.500h4M6 8h4M6 10.500h4" stroke="#e11"/></svg></button>
        <button aria-label="Target"><svg viewBox="0 0 16 16"><path d="M0 0h16v12l-4 4H0z"/><path d="M3 8h10M8 3v10" stroke="#999"/><circle cx="8" cy="8" r="2.500" fill="none" stroke="#999"/></svg></button>
        <label for="cmd">Command:</label>
      </div>
      <input id="cmd" type="text" class="dark">
    </div>
  </section>

  <aside class="pane">
    <header><h2>Colors and Brushes</h2><button aria-label="Pin"><svg viewBox="0 0 10 10"><path d="M3 1h4.500v5M3 1v5M1.500 6.500h7M5 6.500V10M6.500 1v5" stroke-width="1.200"/></svg></button><button aria-label="Close pane"><svg viewBox="0 0 10 10"><path d="M1 1l8 8M9 1L1 9" stroke-width="1.800"/></svg></button></header>
    <div class="body">
      <nav class="strip">
        <button><svg><use href="#w-mea"/></svg>M...</button><button><svg><use href="#s-V"/></svg>V...</button><button><svg><use href="#w-lib"/></svg>L...</button><button><svg><use href="#s-L"/></svg>L...</button><button><svg><use href="#s-S"/></svg>S...</button><button><svg><use href="#w-sty"/></svg>S...</button><button><svg><use href="#w-tool"/></svg>T...</button><button class="on"><svg><use href="#w-pal"/></svg>C...</button><button><svg><use href="#w-blk"/></svg>B...</button><button><svg><use href="#w-sel"/></svg>S...</button><button><svg><use href="#s-Li"/></svg>L...</button><button><svg><use href="#s-B"/></svg>B...</button><button><svg><use href="#w-draft"/></svg>D...</button><button><svg><use href="#w-gear"/></svg>D...</button><button><svg><use href="#w-var"/></svg>V...</button><button><svg><use href="#s-W"/></svg>W...</button>
      </nav>
      <div class="card">
        <div class="tools pens">
          <button aria-label="Pen colors"><svg><use href="#b1"/></svg></button><button aria-label="Pen pattern"><svg><use href="#b2"/></svg></button><button aria-label="Brush pattern"><svg><use href="#b3"/></svg></button>
          <div class="chip"><i></i><button aria-label="Edit color"><svg viewBox="0 0 16 16"><path d="M12 2l-7 8-1 3 3-1 7-8z" fill="#dd3" stroke="#622"/><path d="M3 14h9" stroke="#a11" stroke-width="1.500"/></svg></button></div>
          <span class="push"></span>
          <button aria-label="Color detail"><svg><use href="#b4"/></svg></button><button class="sel" aria-label="Show colors"><svg><use href="#b5"/></svg></button>
        </div>
        <div class="colors" id="colors"></div>
        <div class="tools brushes">
          <button class="sel" aria-label="Hatches"><svg><use href="#h1"/></svg></button><button class="sel" aria-label="Gradients"><svg><use href="#h2"/></svg></button><button class="sel" aria-label="Images"><svg><use href="#h3"/></svg></button>
          <div class="chip"><i></i><button aria-label="Brush color"><svg viewBox="0 0 16 16"><path d="M4 6l6 6M3 9l4 4" stroke="#22a" stroke-width="3"/><path d="M9 8l5-5" stroke="#111" stroke-width="2"/></svg></button></div>
          <div class="chip"><i></i><button aria-label="Fill color"><svg viewBox="0 0 16 16"><path d="M2 8l6-5 5 5-6 5z" fill="#1a1" stroke="#111"/><path d="M12 7q4 1 3 6" stroke="#182" stroke-width="2" fill="none"/></svg></button></div>
          <input type="range" min="0" max="100" value="0" aria-label="Opacity">
          <span class="push"></span>
          <button class="sel" aria-label="Show brushes"><svg><use href="#b6"/></svg></button>
        </div>
        <div class="hatches" id="hatches"></div>
      </div>
    </div>
  </aside>
</main>

<footer class="status">
  <p>Select object(s)</p>
  <input class="dark" type="text" value="in" aria-label="X coordinate">
  <label for="cy"><i></i>Y</label><input id="cy" class="dark" type="text" value="17.76 in">
  <label for="cz"><i></i>Z</label><input id="cz" class="dark" type="text" value="0 in">
  <output>28%</output><time>15:15</time>
</footer>

<section class="dialog" role="dialog" aria-label="Customize">
  <header><h2>Customize</h2><button aria-label="Close dialog"><svg viewBox="0 0 14 14"><path d="M1 1l12 12M13 1L1 13"/></svg></button></header>
  <nav><button><u>O</u>ptions</button><button>Tool<u>b</u>ars</button><button>Pop-UpToolbars</button><button>Palettes</button><button>Tool <u>G</u>roups</button><button><u>C</u>ommands</button><button><u>K</u>eyboard</button><button class="on">Dynamic Input</button><button>Customize <u>R</u>ibbon</button><button>Aliases</button></nav>
  <div class="sheet">
    <div class="line"><label class="check"><input type="checkbox" checked><span>Show Dynamic <u>D</u>imensions</span></label><hr></div>
    <label class="radio"><input type="radio" name="dim" checked><span>Show only <u>1</u> dimension at a time</span></label>
  </div>
</section>
<script src="script.js"></script>
</body>
</html>
```

FILE: styles.css
```css
* { box-sizing: border-box; }
html, body { height: 100%; margin: 0; }
body {
  display: flex; flex-direction: column; position: relative; overflow: hidden;
  background: #383838; color: #fff;
  font: 14px/20px "Open Sans", "Noto Sans", sans-serif;
}
button { font: inherit; color: inherit; background: none; border: 0; padding: 0; margin: 0; }
h1, h2, p, ul { margin: 0; padding: 0; font-size: inherit; font-weight: 400; list-style: none; }
u { text-decoration-thickness: 1px; text-underline-offset: 2px; text-decoration-skip-ink: none; }
.defs { position: absolute; width: 0; height: 0; }

.titlebar { display: flex; flex: none; height: 29px; align-items: center; background: #fff; color: #8c8c8c; padding-right: 3px; }
.logo { width: 22px; height: 22px; margin: 0 4px 0 1px; }
.titlebar h1 { flex: 1; }
.titlebar button { width: 59px; height: 29px; }
.titlebar button svg { width: 12px; height: 12px; fill: none; stroke: #888; }

.menubar { display: flex; flex: none; height: 29px; background: #2d2d2d; border-bottom: 1px solid #888; padding-left: 4px; gap: 1px; }
.quick { display: flex; gap: 6px; align-items: center; width: 127px; }
.quick svg { width: 20px; height: 20px; display: block; }
.menubar a { color: #fff; text-decoration: none; padding: 6px 14px 0; }
.menubar a.on { background: #555; border: 1px solid #888; border-bottom: 0; border-radius: 3px 3px 0 0; margin: 3px 3px -1px; padding: 2px 10px 0; }
.mdi { display: flex; margin-left: auto; gap: 6px; padding: 0 4px 4px; align-items: center; }
.mdi svg { width: 10px; height: 10px; fill: none; stroke: #fff; display: block; }

.ribbon { display: flex; flex: none; height: 135px; background: #555; border-left: 2px solid #777; }
.grp { display: flex; flex-direction: column; flex: none; padding: 4px 2px 2px 0; border-right: 1px solid #888; box-shadow: inset -1px 0 #2a2a2a; }
.grp h2 { margin-top: auto; height: 16px; background: linear-gradient(#4c4c4c, #404040); color: #a0a0a0; font-size: 11px; line-height: 16px; text-align: center; white-space: nowrap; overflow: hidden; }
.grp h2.start { text-align: left; padding-left: 14px; }
.cols { display: flex; padding-left: 10px; }
.col { display: flex; flex-direction: column; align-items: flex-start; }
.col button { display: flex; align-items: center; height: 26px; white-space: nowrap; }
.col svg { width: 20px; height: 20px; flex: none; display: block; }
.cmd span { margin-left: 1px; }
.icons > button { min-width: 26px; }
.icons > .lit, .props .lit { background: #5f7ba6; box-shadow: -3px 0 #5f7ba6; border-right: 3px solid #555; }
.props .lit { box-shadow: none; border: 0; }
.drop::after { content: ""; border: 3px solid transparent; border-top: 4px solid #fff; border-bottom: 0; margin-left: 3px; }
.w220 { width: 220px; } .w171 { width: 171px; } .w134 { width: 134px; } .w90 { width: 90px; }
.w425 { width: 425px; } .w70 { width: 70px; } .w65 { width: 65px; } .w58 { width: 58px; }
.w152 { width: 152px; } .w63 { width: 63px; } .w114 { width: 114px; } .w113 { width: 113px; }
.c120 { width: 120px; } .c128 { width: 128px; } .c108 { width: 108px; }

.split { position: relative; }
.split .open { width: 32px; height: 25px; margin-left: -3px; padding-left: 2px; border: 2px solid #000; background: #86a9e0; }
.open::after { content: ""; border: 3px solid transparent; border-top: 4px solid #000; border-bottom: 0; margin-left: 1px; }
.menu {
  position: absolute; z-index: 5; top: 25px; left: -3px; width: 294px;
  border-top: 1px solid #888; border-right: 1px solid #3c3c3c;
  background: linear-gradient(90deg, rgba(76, 76, 76, .95) 31px, rgba(52, 52, 52, .76) 31px);
  padding: 1px 0 0;
}
.menu li { height: 28px; }
.menu li button { width: 100%; height: 28px; padding-left: 6px; gap: 13px; color: #f2f2f2; }
.menu .sub { gap: 21px; }
.menu .marked { position: relative; height: 26px; background: linear-gradient(rgba(30, 30, 30, .8), rgba(60, 60, 60, .8)) 31px 0 no-repeat; }
.menu .marked::after { content: ""; position: absolute; left: -8px; right: -20px; top: -8px; bottom: -1px; border: 3px solid #f43c3c; }

.propbar { display: flex; flex: none; height: 36px; padding-top: 3px; }
.props { display: flex; width: 1372px; background: #4a4a4a; border-top: 1px solid #888; border-bottom: 2px solid #999; align-items: center; padding-left: 6px; gap: 1px; }
.props > * { flex: none; }
.props button { height: 26px; width: 26px; display: grid; place-items: center; margin-left: 2px; }
.props button svg { width: 20px; height: 20px; }
.props .win { width: 74px; display: block; }
.grip { width: 2px; height: 20px; border-left: 2px dotted #888; }
.bar { width: 2px; height: 20px; border-left: 1px solid #222; border-right: 1px solid #888; margin: 0 2px; }
.far { margin-left: 16px; }
.combo { position: relative; height: 25px; }
.combo select { width: 100%; height: 100%; appearance: none; background: #4a4a4a; border: 1px solid #999; border-radius: 0; display: block; }
.combo::after { content: ""; position: absolute; right: 5px; top: 11px; border: 4px solid transparent; border-top: 5px solid #aaa; border-bottom: 0; }
.filled select { background: linear-gradient(#777, #777) 2px 2px / calc(100% - 22px) 19px no-repeat #4a4a4a; }
.w124 { width: 124px; } .w268 { width: 268px; } .w112 { width: 112px; } .w88 { width: 88px; }
.w100 { width: 100px; } .w102 { width: 102px; } .w142 { width: 142px; }

main { display: flex; flex: 1; min-height: 0; gap: 4px; }
.work { flex: 1; min-width: 0; display: flex; flex-direction: column; }
.view { flex: 1; display: flex; min-height: 0; border-left: 2px solid #888; }
.canvas { flex: 1; min-width: 0; height: 100%; background: #000; border-right: 2px solid #eee; border-bottom: 2px solid #eee; border-top: 2px solid #000; shape-rendering: crispEdges; }
.axis { font: bold 13px "Liberation Sans", sans-serif; }
.vscroll { width: 21px; display: flex; flex-direction: column; background: #6e6e6e; }
.vscroll button { height: 20px; background: #4d4d4d; display: grid; place-items: center; }
.up::after { content: ""; border: 4px solid transparent; border-bottom: 4px solid #fff; border-top: 0; }
.down::after { content: ""; border: 4px solid transparent; border-top: 4px solid #fff; border-bottom: 0; }
.track { flex: 265; } .thumb { flex: 97; background: #4d4d4d; border: 1px solid #444; } .rest { flex: 246; }

.sheets { display: flex; flex: none; height: 22px; background: #6e6e6e; border-bottom: 1px solid #333; }
.sheets button { display: flex; align-items: center; gap: 3px; padding: 1px 8px 0 5px; background: #505050; color: #aaa; border: 1px solid #444; border-top: 0; }
.sheets svg { width: 14px; height: 14px; }
.sheets .on { background: #6a6a6a; color: #fff; margin-left: 4px; border: 1px solid #111; border-top: 0; border-radius: 0 0 4px 4px; }
.sheets .gap { width: 30px; background: #555; border-right: 3px solid #eee; }
.sheets .left { width: 21px; padding: 0 0 0 7px; }
.left::after { content: ""; border: 4px solid transparent; border-right: 4px solid #fff; border-left: 0; }
.console { flex: none; display: grid; grid-template: 63px 35px / 225px 1fr; column-gap: 2px; padding-left: 2px; border-top: 4px solid #3a3a3a; background: #555; color: #000; }
.hist, .out { background: #fff; border-top: 2px solid #999; }
.hist { padding: 1px 0 0 25px; line-height: 23px; }
.hist li { position: relative; }
.hist li::before { content: ""; position: absolute; left: -12px; top: 12px; width: 8px; border-top: 1px dotted #888; }
.hist li + li::before { top: -11px; height: 23px; border: 1px dotted #888; border-width: 0 0 1px 1px; }
.ok { color: #0a9a1a; } .bad { color: #c80a14; }
.out { padding: 1px 0 0 2px; }
.out .ind { padding-left: 8px; }
.ctl { display: flex; align-items: flex-start; gap: 7px; padding: 2px 3px 0 2px; color: #eee; }
.set { display: flex; margin-right: 3px; }
.set button { border: 1px solid #7fa5e0; background: #777; padding: 2px; width: 23px; height: 22px; }
.ctl svg { width: 16px; height: 16px; display: block; margin: auto; }
.ctl > button { padding-top: 3px; }
.ctl label { margin-left: auto; padding-top: 6px; }
.dark { background: #2a2a2a; color: #fff; border: 1px solid #999; border-radius: 0; font: inherit; padding: 0 5px; }
#cmd { margin-top: 2px; border-bottom-color: #fff; }

.pane { flex: none; width: 432px; display: flex; flex-direction: column; background: #555; border-top: 2px solid #111; }
.pane header { display: flex; align-items: center; height: 24px; padding: 0 4px 3px 3px; gap: 6px; }
.pane header h2 { flex: 1; }
.pane header svg { width: 10px; height: 10px; fill: none; stroke: #fff; display: block; }
.body { flex: 1; display: flex; min-height: 0; }
.strip { width: 29px; display: flex; flex-direction: column; background: #383838; border-right: 2px solid #86a9e0; padding-left: 2px; }
.strip button { flex: 1; min-height: 0; display: flex; align-items: center; gap: 2px; padding: 3px 0 0; writing-mode: vertical-rl; font-size: 13px; line-height: 22px; white-space: nowrap; }
.strip svg { width: 20px; height: 20px; flex: none; }
.strip .on { background: #86a9e0; color: #000; font-weight: 700; }
.card { flex: 1; min-width: 0; margin: 0 2px 2px 3px; padding: 0 1px; border: 1px solid #444; border-radius: 4px; }
.tools { display: flex; align-items: center; height: 32px; }
.pens { padding-left: 2px; }
.brushes { height: 36px; margin-top: 2px; }
.tools > button { width: 29px; height: 28px; display: grid; place-items: center; }
.tools > button svg { width: 24px; height: 24px; }
.tools .sel { border: 1px solid #86a9e0; background: #707070; }
.chip { display: flex; height: 24px; margin-left: 6px; }
.brushes .sel + .chip { margin-left: 17px; }
.chip i { width: 38px; background: #000; border: 2px solid #ddd; outline: 1px solid #888; outline-offset: -1px; }
.chip button { width: 17px; background: #eee; margin-left: 1px; }
.chip svg { width: 16px; height: 16px; display: block; }
.push { flex: 1; }
input[type=range] { appearance: none; background: none; width: 58px; height: 24px; margin: 0 0 0 13px; }
input[type=range]::-webkit-slider-runnable-track { height: 4px; background: #e6e6e6; }
input[type=range]::-webkit-slider-thumb { appearance: none; width: 11px; height: 19px; margin-top: -8px; background: #0078d7; clip-path: polygon(50% 0, 100% 25%, 100% 100%, 0 100%, 0 25%); }
.colors { display: grid; grid-template: repeat(8, 1fr) / repeat(9, 1fr); height: 334px; border-top: 1px solid #fff; }
.colors button { border: solid #fff; border-width: 0 1px 1px 0; display: grid; place-items: center; background: #fff; }
.colors svg { width: 18px; height: 18px; }
.hatches { display: grid; grid-template-columns: repeat(10, 1fr); gap: 4px; padding: 0 3px 0 1px; }
.hatches button { height: 38px; border: 1px solid #000; background: #fff; overflow: hidden; }
.hatches svg { display: block; width: 100%; height: 100%; }
.hatches .none { border-color: #fff; padding: 10px; }

.status { flex: none; height: 30px; display: flex; align-items: center; background: #555; padding-left: 8px; }
.status p { flex: 1; padding-bottom: 4px; }
.status .dark { width: 95px; height: 25px; }
.status label { width: 22px; height: 25px; display: flex; flex-direction: column; align-items: center; font-size: 10px; line-height: 15px; padding-top: 1px; margin-right: 1px; }
.status label i { width: 7px; height: 7px; border: 1px solid #fff; flex: none; }
.status output { margin-left: 9px; width: 70px; padding-bottom: 6px; }
.status time { width: 70px; padding-bottom: 6px; }

.dialog { position: absolute; z-index: 4; left: 550px; right: 440px; bottom: 0; height: 154px; background: #555; display: flex; flex-direction: column; box-shadow: 0 0 16px rgba(0, 0, 0, .35); }
.dialog header { height: 37px; flex: none; background: #fff; color: #000; display: flex; justify-content: space-between; align-items: center; padding: 0 13px 0 9px; }
.dialog header svg { width: 14px; height: 14px; fill: none; stroke: #111; display: block; }
.dialog nav { display: flex; height: 34px; padding: 8px 0 0 10px; color: #bbb; align-items: flex-end; white-space: nowrap; }
.dialog nav button { padding: 0 6px; height: 25px; }
.dialog nav .on { color: #fff; font-weight: 700; border: 1px solid #999; border-bottom: 0; background: #555; border-radius: 3px 3px 0 0; margin: 0 0 -1px; height: 26px; position: relative; }
.sheet { flex: 1; margin: 0 8px; border: 1px solid #888; border-bottom: 0; border-right-color: #333; padding: 24px 0 0 119px; }
.line { display: flex; align-items: center; }
.check, .radio { display: flex; align-items: center; }
.check span { border: 1px dotted #ccc; padding: 0 2px 0 1px; }
.check input { appearance: none; width: 15px; height: 15px; margin: 0 4px 0 0; background: #fff; border: 1px solid #777; display: grid; place-items: center; }
.check input::after { content: ""; width: 4px; height: 7px; border: solid #000; border-width: 0 2px 2px 0; rotate: 45deg; margin-top: -3px; }
.line hr { width: 270px; height: 3px; border: 1px solid #aaa; border-bottom-color: #333; margin: 0 0 0 61px; }
.radio { margin: 17px 0 0 57px; }
.radio input { appearance: none; width: 12px; height: 12px; border-radius: 50%; background: #fff; border: 1px solid #888; margin: 0 9px 0 0; }
```

FILE: script.js
```js
// Pen colour swatches, nine to a row.
const colors = `000000 545454 a8a8a8 c0c0c0 ffffff d8d8bf bfd8d8 d8bfd8 bc8f8f
8fbc8f 8f8fbc e8e8a8 a8e8e8 e8a8e8 704242 427042 424270 4f2f2f
4f4f2f 2f4f2f 2f4f4f 2f2f4f 4f2f4f 9f9f5f 5f9f9f 9f5f9f db9370
dbdb70 93db70 70db93 70dbdb 7093db 9370db db70db db7093 a52a2a
8e2323 8e6b23 6b8e23 238e23 238e6b 236b8e 23238e 6b238e 8e236b
cc3232 cc7f32 99cc32 32cc32 32cc99 3299cc 3232cc 9932cc cc3299
ff0000 ff7f00 ffff00 7fff00 00ff00 00ff7f 00ffff 007fff 0000ff
7f00ff ff00ff ff007f`.split(/\s+/);
const special = [
  '<path d="M5 2h12l-4 4H1zM5 12h12l-4 4H1z" fill="#fff" stroke="#111"/><path d="M5 7h12l-4 4H1z" fill="#0cc" stroke="#114"/>',
  '<rect x="2" y="2" width="14" height="14" fill="none" stroke="#118"/><path d="M5 6h6v5H5zM7 8h6v4H7z" fill="none" stroke="#111"/><path d="M1 1h3v3H1zM14 1h3v3h-3zM1 14h3v3H1zM14 14h3v3h-3z" fill="#118"/>',
  '<rect x="1.5" y="1.5" width="15" height="15" fill="none" stroke="#777"/><path d="M4 4h3v3H4zM4 10h3v3H4zM9 6h5M9 11h5" fill="none" stroke="#111"/><path d="M17 12v5h-5z" fill="#cc2"/>'
];
document.getElementById('colors').innerHTML =
  colors.map(c => `<button aria-label="#${c}" style="background:#${c}"></button>`).join('') +
  special.map(s => `<button aria-label="By source"><svg viewBox="0 0 18 18">${s}</svg></button>`).join('');

// Hatch tiles: [width, height, path, stroke width, rotation].
let seed = 7;
const rnd = n => (seed = (seed * 16807) % 2147483647) % n;
const noise = n => Array.from({ length: n }, () => `M${rnd(34)} ${rnd(37) + 0.5}h${1 + rnd(2)}`).join('');
const P = {
  solid: [4, 4, 'M0 2h4', 4],
  diag: [8, 8, 'M0 4h8', 1, -45], wide: [10, 10, 'M0 5h10', 1, -45],
  pair: [9, 9, 'M0 2h9M0 5h9', 1, -45], bold: [10, 10, 'M0 1h10M0 3h10M0 5h10', 1, -45],
  mid: [5, 5, 'M0 3h5', 1, -45], back: [6, 6, 'M0 3h6', 1, 45],
  x: [8, 8, 'M0 3h8M3 0v8', 1, 45], x2: [6, 8, 'M0 2h6M0 5h6M3 0v8', 1, -45], x3: [6, 6, 'M0 2h6M2 0v6', 1, 45],
  dash: [14, 7, 'M0 3.5h6', 1], dash2: [9, 6, 'M1 3.5h6', 1], dash3: [6, 5, 'M1 1.500h4', 1],
  dd: [14, 6, 'M0 3.500h6M9 3.500h2', 1], staple: [7, 9, 'M1.500 7V2.500h4V7', 1],
  brick: [12, 10, 'M0 .5h12M0 5.500h12M2.500 0v5M8.500 5v5', 1],
  brick2: [14, 12, 'M0 .5h14M0 6.500h14M3.500 0v6M10.500 6v6', 1],
  brickb: [14, 12, 'M0 1h14M0 7h14M4 0v6M11 6v6', 2],
  block: [10, 14, 'M0 .5h10M0 7.500h10M1.500 0v7M6.500 7v7', 1],
  brickx: [18, 10, 'M0 .5h18M0 5.500h18M4.500 0v5M13.500 5v5', 1],
  herr: [10, 10, 'M0 .5h7M3.500 3.500h5M.5 0v7M3.500 3.500v6.500M6.500 0v3.500M0 6.500h3.500M6.500 7v3', 1, 45],
  basket: [22, 22, 'M0 1.500h11M0 4.500h11M0 7.500h11M0 10.500h11M12.500 0v11M15.500 0v11M18.500 0v11M21.500 0v11M1.500 11v11M4.500 11v11M7.500 11v11M10.500 11v11M11 12.500h11M11 15.500h11M11 18.500h11M11 21.500h11', 1],
  grid2: [10, 5, 'M0 .5h10M.5 0v5', 1], grid: [7, 8, 'M0 .5h7M.5 0v8', 1], grid3: [9, 8, 'M0 .5h9M.5 0v8', 1], grid4: [14, 4, 'M0 .5h14M.5 0v4', 1],
  parq: [14, 14, 'M0 .5h9M5 5.500h9M.5 0v9M5.500 5v9M9.500 0v5M0 9.500h5M10.500 10v4', 1],
  wood: [34, 12, 'M0 1h34M0 4h20M6 6h28M0 9h30M10 10.500h20', 1.600],
  shake: [12, 14, 'M0 .5h12M0 7.500h12M1.500 0v7M4.500 0v7M6.500 0v7M10.500 0v7M3.500 7v7M7.500 7v7M9.500 7v7', 1],
  cols: [13, 10, 'M.5 0v10M10.500 0v10M3.500 3.500h4v4h-4zM0 .5h3', 1],
  lnd: [8, 8, 'M0 .5h8M1 4.500h5', 1], thd: [9, 12, 'M0 1h9M0 4h9M1 8h6', 1.800],
  slash: [17, 8, 'M0 .5h17M0 4.500h17M3 1l6 4', 1], slash2: [22, 6, 'M0 .5h22M9 5l4-4', 1],
  plus: [12, 12, 'M1 3.500h5M3.500 1v5M7 9.500h5M9.500 7v5', 1], plus2: [9, 9, 'M2 4.500h5M4.500 2v5', 1],
  dots: [14, 14, 'M2 3.500h1M9 10.500h1', 1],
  weave: [12, 12, 'M0 1.500h7M0 4.500h7M8.500 0v6M11.500 0v6M6 7.500h6M6 10.500h6M1.500 6v6M4.500 6v6', 1],
  tri: [12, 14, 'M0 0l6 7 6-7M0 14l6-7 6 7M0 7.500h12M0 .5h12', 1], star: [17, 18, 'M0 0l17 18M17 0L0 18M8.500 0v18M0 9.500h17M4 0l9 18M13 0L4 18', 1],
  curl: [13, 8, 'M1 5.500h6l4-3', 1], tick: [12, 12, 'M2 2.500h3M3 3.500h1M8 8.500h3M9 9.500h1', 1],
  hex: [22, 24, 'M7 6l3-3 4 1 1 4-3 3-4-1zM-3 18l2-3h4l2 3-2 3h-4zM19 18l2-3h4M19 18l2 3', 1],
  honey: [12, 12, 'M0 3l3-3h4l3 3-3 3H3zM10 3h2M0 9h1M1 9l2-3M9 9L7 6M1 9l2 3M9 9l-2 3M9 9h3', 1],
  net: [24, 24, 'M0 3.500h14M0 6.500h14M0 9.500h14M12 12.500h12M12 15.500h12M12 18.500h12M16.500 0v12M19.500 0v12M22.500 0v12M3.500 12v12M6.500 12v12M9.500 12v12M0 20l6 4', 1],
  hz: [8, 8, 'M0 4.500h8', 1], hb: [8, 8, 'M0 3.500h8', 3], vt: [7, 7, 'M3.500 0v7', 1], hb2: [8, 12, 'M0 2h8M0 6h8M0 9.500h8', 2],
  stars: [20, 20, 'M10 2l2 5 5-1-3 4 3 5-5-1-2 4-2-4-5 1 3-5-3-4 5 1z', 1],
  ast: [7, 8, 'M1 2l4 4M5 2L1 6M3.500 2v4', 1],
  batt: [14, 12, 'M0 8.500h4.500V3.500h6v5h4', 1], tick2: [10, 10, 'M1 3.500h4M8.500 0v5M6 8.500h3M2.500 6v4', 1],
  oct: [8, 8, 'M2.500.5h3l2 2v3l-2 2h-3l-2-2v-3z', 1],
  scale: [13, 12, 'M0 5q3-6 6 0 3-6 7 0M1.500 8v4M7 6l3 1v5', 1.500], sq: [14, 14, 'M4.500 4.500h6v6h-6z', 1],
  stair: [12, 9, 'M0 8.500h5.500v-4h5v-4h2', 1],
  n1: [35, 38, noise(220), 1], n2: [35, 38, noise(300), 1], n3: [35, 38, noise(120), 1]
};
const order = `solid diag dash staple brick2 brickx block brickb brick2 n1
herr basket grid wide pair diag bold mid mid x
x2 brick brickx n2 parq wood shake n3 cols lnd
thd slash plus dash2 slash2 dots weave star curl tick
grid4 hex honey net dash3 hz dd grid3 tri hb
hb2 n2 stars pair ast batt brick2 grid2 tick2 oct
plus2 lnd parq oct vt scale sq grid3 tri stair
mid grid3 x3 back hz vt`.split(/\s+/);
const defs = Object.entries(P).map(([k, [w, h, d, s, r]]) =>
  `<pattern id="p-${k}" width="${w}" height="${h}" patternUnits="userSpaceOnUse"${r ? ` patternTransform="rotate(${r})"` : ''}><path d="${d}" fill="none" stroke="#000" stroke-width="${s}"/></pattern>`).join('');
document.querySelector('.defs').insertAdjacentHTML('beforeend', defs);
document.getElementById('hatches').innerHTML =
  order.map(k => `<button aria-label="Hatch ${k}"><svg><rect width="100%" height="100%" fill="url(#p-${k})"/></svg></button>`).join('') +
  '<button class="none" aria-label="No hatch"><svg viewBox="0 0 16 16"><path d="M.5.5h15v15H.5zM.5.5l15 15M15.500.5l-15 15" fill="none" stroke="#888"/></svg></button>';
```
